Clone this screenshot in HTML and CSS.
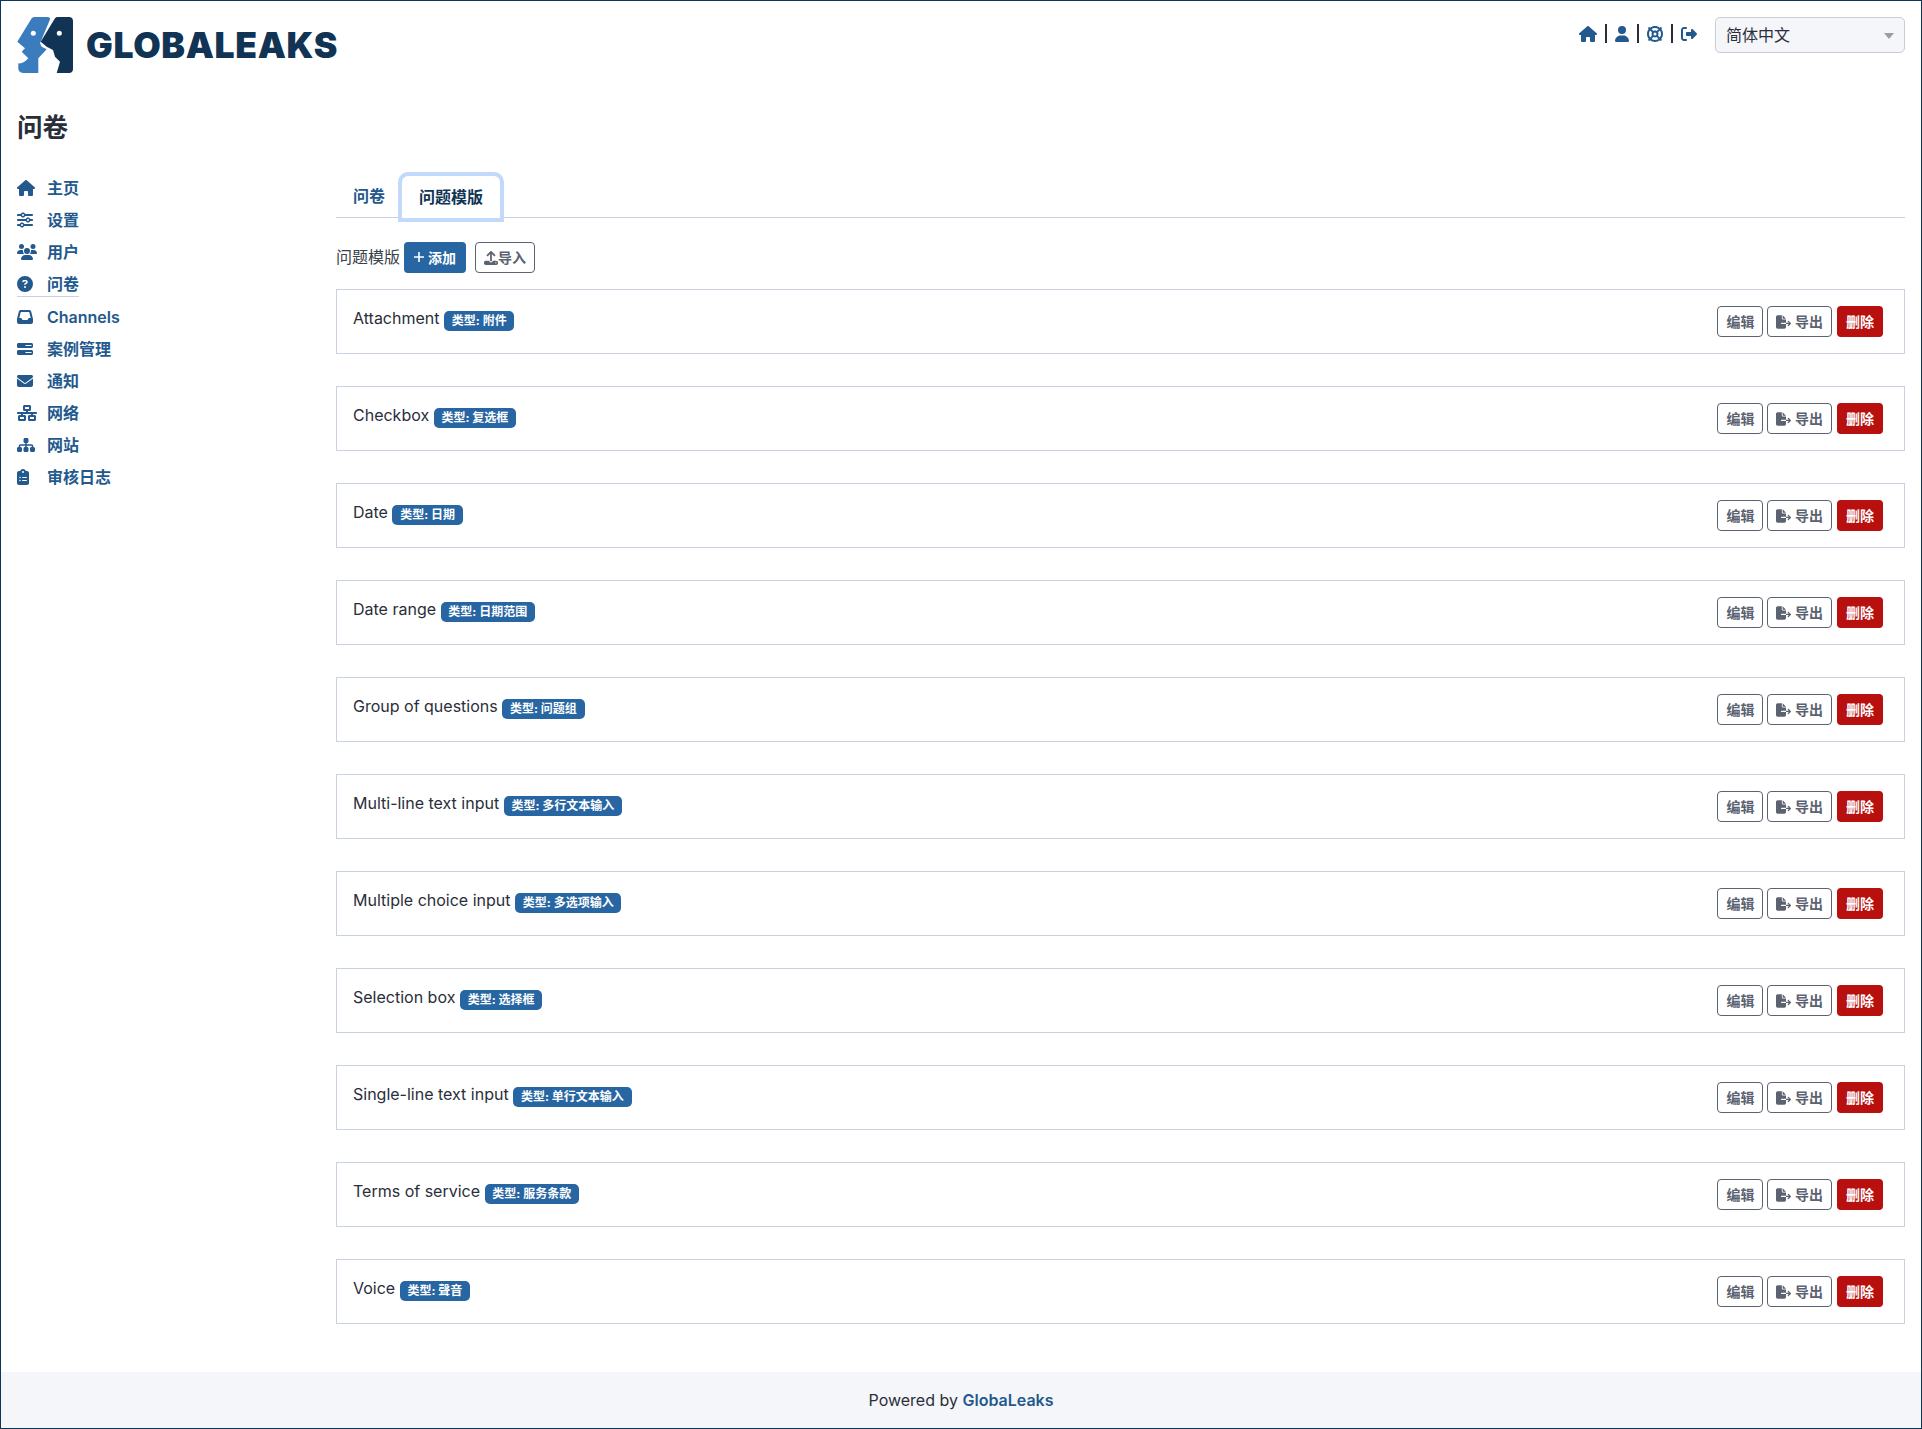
FILE: index.html
```html
<!DOCTYPE html>
<html lang="zh-CN">
<head>
    <meta charset="UTF-8">
    <meta name="viewport" content="width=device-width, initial-scale=1.0">
    <title>GlobaLeaks</title>
    <link rel="stylesheet" href="styles.css">
</head>
<body>
<div class="page">
    <header class="topbar">
        <a class="logo" href="#">
            <svg class="logo-mark" viewBox="0 0 56 56" width="56" height="56">
                <path class="face-left" d="M14.700 1.300C15.500.4 16.500 0 18 0H30C32.500 0 33.500 1 33 2.500L23 26.300L24.700 29.700L29.700 32.300L21.300 41.300V56H6C3 56 1.300 54 1.300 51.300V46.300Q6.500 47 11.300 41.300L4.700 34.700L8 31.300L.3 24.700Z"/>
                <circle class="eye" cx="16.300" cy="16.300" r="2.500"/>
                <path class="face-right" d="M38 1.300C38.800.4 39.500 0 41 0H52C54.500 0 56 1.500 56 4V52C56 54.500 54.500 56 52 56H39.700L43 44.700L38 39.700L36 33L29.700 29.700L23.700 24.700Z"/>
                <circle class="eye" cx="42.300" cy="16.300" r="2.500"/>
            </svg>
            <span class="logo-text">GLOBALEAKS</span>
        </a>
        <div class="top-right">
            <nav class="top-icons">
                <a href="#"><svg class="icon icon-home"><use href="#i-home"/></svg></a>
                <a href="#"><svg class="icon icon-user" viewBox="0 0 448 512"><path d="M224 256A128 128 0 1 0 224 0a128 128 0 1 0 0 256zm-45.700 48C79.800 304 0 383.800 0 482.300C0 498.700 13.300 512 29.700 512H418.300c16.400 0 29.700-13.300 29.700-29.700C448 383.800 368.200 304 269.700 304H178.300z"/></svg></a>
                <a href="#"><svg class="icon" viewBox="0 0 512 512"><path d="M367.200 412.500C335.900 434.900 297.500 448 256 448s-79.900-13.100-111.200-35.500l58-58c15.800 8.600 34 13.500 53.300 13.500s37.400-4.900 53.300-13.500l58 58zm90.700 .8c33.800-43.400 54-98 54-157.300s-20.200-113.900-54-157.300l9-9c12.500-12.500 12.500-32.800 0-45.300s-32.800-12.500-45.300 0l-9 9C369.900 20.200 315.300 0 256 0S142.100 20.200 98.700 54l-9-9C77.200 32.500 56.900 32.500 44.400 45s-12.500 32.800 0 45.300l9 9C20.200 142.100 0 196.700 0 256s20.200 113.900 54 157.300l-9 9c-12.500 12.500-12.500 32.800 0 45.300s32.800 12.500 45.300 0l9-9C142.100 491.800 196.700 512 256 512s113.900-20.200 157.300-54l9 9c12.500 12.500 32.800 12.500 45.300 0s12.500-32.800 0-45.300l-9-9zm-45.400-268C434.900 176.100 448 214.500 448 256s-13.100 79.900-35.500 111.200l-58-58c8.600-15.800 13.500-34 13.500-53.300s-4.900-37.400-13.500-53.300l58-58zm-45.300-45.300l-58 58C293.400 149 275.300 144 256 144s-37.400 4.900-53.300 13.500l-58-58C176.100 77.100 214.500 64 256 64s79.900 13.100 111.200 35.500zM157.500 309.300l-58 58C77.100 335.900 64 297.500 64 256s13.100-79.900 35.500-111.200l58 58C149 218.600 144 236.700 144 256s4.900 37.400 13.500 53.300zM208 256a48 48 0 1 1 96 0 48 48 0 1 1 -96 0z"/></svg></a>
                <a href="#"><svg class="icon" viewBox="0 0 512 512"><path d="M377.900 105.900L500.700 228.700c7.200 7.200 11.300 17.100 11.300 27.300s-4.100 20.100-11.300 27.300L377.900 406.100c-6.400 6.400-15 9.900-24 9.900c-18.700 0-33.900-15.200-33.900-33.900l0-62.100-128 0c-17.700 0-32-14.300-32-32l0-64c0-17.700 14.300-32 32-32l128 0 0-62.100c0-18.700 15.200-33.900 33.900-33.900c9 0 17.600 3.600 24 9.900zM160 96L96 96c-17.700 0-32 14.300-32 32l0 256c0 17.700 14.300 32 32 32l64 0c17.700 0 32 14.300 32 32s-14.300 32-32 32l-64 0c-53 0-96-43-96-96L0 128C0 75 43 32 96 32l64 0c17.700 0 32 14.300 32 32s-14.300 32-32 32z"/></svg></a>
            </nav>
            <div class="lang-select">简体中文<span class="caret"></span></div>
        </div>
    </header>

    <h1 class="page-title">问卷</h1>

    <div class="layout">
        <aside class="sidebar">
            <a class="side-link" href="#"><svg class="side-icon"><use href="#i-home"/></svg><span>主页</span></a>
            <a class="side-link" href="#"><svg class="side-icon" viewBox="0 0 512 512" preserveAspectRatio="xMinYMid meet"><path d="M0 416c0 17.700 14.300 32 32 32l54.700 0c12.300 28.300 40.500 48 73.300 48s61-19.700 73.300-48L480 448c17.700 0 32-14.300 32-32s-14.300-32-32-32l-246.700 0c-12.300-28.300-40.500-48-73.300-48s-61 19.700-73.300 48L32 384c-17.700 0-32 14.300-32 32zm128 0a32 32 0 1 1 64 0 32 32 0 1 1 -64 0zM320 256a32 32 0 1 1 64 0 32 32 0 1 1 -64 0zm32-80c-32.800 0-61 19.700-73.300 48L32 224c-17.700 0-32 14.300-32 32s14.300 32 32 32l246.700 0c12.300 28.300 40.500 48 73.300 48s61-19.700 73.300-48l54.700 0c17.700 0 32-14.300 32-32s-14.300-32-32-32l-54.700 0c-12.300-28.300-40.500-48-73.300-48zM192 128a32 32 0 1 1 0-64 32 32 0 1 1 0 64zm73.300-64C253 35.700 224.800 16 192 16s-61 19.700-73.300 48L32 64C14.300 64 0 78.300 0 96s14.300 32 32 32l86.700 0c12.300 28.300 40.500 48 73.300 48s61-19.700 73.300-48L480 128c17.700 0 32-14.300 32-32s-14.300-32-32-32L265.300 64z"/></svg><span>设置</span></a>
            <a class="side-link" href="#"><svg class="side-icon" viewBox="0 0 640 512" preserveAspectRatio="xMinYMid meet"><path d="M144 0a80 80 0 1 1 0 160A80 80 0 1 1 144 0zM512 0a80 80 0 1 1 0 160A80 80 0 1 1 512 0zM0 298.700C0 239.800 47.800 192 106.700 192h42.700c15.900 0 31 3.500 44.600 9.700c-1.300 7.200-1.900 14.700-1.900 22.300c0 38.200 16.800 72.500 43.300 96c-.2 0-.4 0-.7 0H21.300C9.600 320 0 310.400 0 298.700zM405.300 320c-.2 0-.4 0-.7 0c26.600-23.500 43.300-57.800 43.300-96c0-7.600-.7-15-1.900-22.300c13.600-6.300 28.700-9.700 44.600-9.700h42.700C592.200 192 640 239.800 640 298.700c0 11.800-9.600 21.300-21.300 21.300H405.300zM224 224a96 96 0 1 1 192 0 96 96 0 1 1 -192 0zM128 485.300C128 411.700 187.700 352 261.300 352H378.700C452.300 352 512 411.700 512 485.300c0 14.700-11.900 26.700-26.700 26.700H154.700c-14.700 0-26.700-11.900-26.700-26.700z"/></svg><span>用户</span></a>
            <a class="side-link active" href="#"><svg class="side-icon" viewBox="0 0 512 512" preserveAspectRatio="xMinYMid meet"><path d="M256 512A256 256 0 1 0 256 0a256 256 0 1 0 0 512zM169.800 165.300c7.900-22.300 29.100-37.300 52.800-37.300h58.300c34.900 0 63.100 28.300 63.100 63.100c0 22.600-12.100 43.500-31.700 54.800L280 264.400c-.2 13-10.900 23.600-24 23.600c-13.300 0-24-10.700-24-24V250.500c0-8.600 4.600-16.500 12.100-20.800l44.300-25.400c4.700-2.700 7.600-7.700 7.600-13.100c0-8.400-6.800-15.100-15.100-15.100H222.600c-3.400 0-6.400 2.100-7.500 5.300l-.4 1.200c-4.400 12.500-18.200 19-30.600 14.600s-19-18.200-14.600-30.600l.4-1.200zM224 352a32 32 0 1 1 64 0 32 32 0 1 1 -64 0z"/></svg><span>问卷</span></a>
            <a class="side-link" href="#"><svg class="side-icon" viewBox="0 0 512 512" preserveAspectRatio="xMinYMid meet"><path d="M121 32C91.600 32 66 52 58.900 80.500L1.900 308.400C.6 313.500 0 318.700 0 323.900V416c0 35.300 28.700 64 64 64H448c35.300 0 64-28.700 64-64V323.900c0-5.200-.6-10.400-1.900-15.500l-57-227.900C446 52 420.400 32 391 32H121zm0 64H391l48 192H387.800c-12.100 0-23.200 6.800-28.600 17.700l-14.300 28.600c-5.400 10.800-16.500 17.700-28.600 17.700H195.800c-12.100 0-23.200-6.800-28.600-17.700l-14.300-28.600c-5.400-10.800-16.500-17.700-28.600-17.700H73L121 96z"/></svg><span>Channels</span></a>
            <a class="side-link" href="#"><svg class="side-icon" viewBox="0 0 16 16" preserveAspectRatio="xMinYMid meet"><path fill-rule="evenodd" d="M1.500 2h13c.8 0 1.500.7 1.500 1.500v2c0 .8-.7 1.500-1.500 1.500h-13C.7 7 0 6.300 0 5.500v-2C0 2.700.7 2 1.500 2zM8.500 3.900v1.200h6V3.900zM1.500 9h13c.8 0 1.500.7 1.500 1.500v2c0 .8-.7 1.500-1.500 1.500h-13C.7 14 0 13.300 0 12.500v-2C0 9.700.7 9 1.500 9zM8.500 10.900v1.200h6v-1.200z"/></svg><span>案例管理</span></a>
            <a class="side-link" href="#"><svg class="side-icon" viewBox="0 0 512 512" preserveAspectRatio="xMinYMid meet"><path d="M48 64C21.500 64 0 85.500 0 112c0 15.100 7.100 29.300 19.200 38.400L236.800 313.600c11.400 8.500 27 8.500 38.400 0L492.800 150.400c12.100-9.100 19.200-23.300 19.200-38.400c0-26.500-21.500-48-48-48H48zM0 176V384c0 35.300 28.700 64 64 64H448c35.300 0 64-28.700 64-64V176L294.400 339.200c-22.800 17.100-54 17.100-76.800 0L0 176z"/></svg><span>通知</span></a>
            <a class="side-link" href="#"><svg class="side-icon" viewBox="0 0 640 512" preserveAspectRatio="xMinYMid meet"><path d="M256 64H384v64H256V64zM240 0c-26.500 0-48 21.500-48 48v96c0 26.500 21.500 48 48 48h48v32H32c-17.700 0-32 14.300-32 32s14.300 32 32 32h96v32H80c-26.500 0-48 21.500-48 48v96c0 26.500 21.500 48 48 48H240c26.500 0 48-21.500 48-48V368c0-26.500-21.500-48-48-48H192V288H448v32H400c-26.500 0-48 21.500-48 48v96c0 26.500 21.500 48 48 48H560c26.500 0 48-21.500 48-48V368c0-26.500-21.500-48-48-48H512V288h96c17.700 0 32-14.300 32-32s-14.300-32-32-32H352V192h48c26.500 0 48-21.500 48-48V48c0-26.500-21.500-48-48-48H240zM96 448V384H224v64H96zm320-64H544v64H416V384z"/></svg><span>网络</span></a>
            <a class="side-link" href="#"><svg class="side-icon" viewBox="0 0 576 512" preserveAspectRatio="xMinYMid meet"><path d="M208 80c0-26.500 21.500-48 48-48h64c26.500 0 48 21.500 48 48v64c0 26.500-21.500 48-48 48h-8v40H464c30.900 0 56 25.100 56 56v32h8c26.500 0 48 21.500 48 48v64c0 26.500-21.500 48-48 48H464c-26.500 0-48-21.500-48-48V368c0-26.500 21.500-48 48-48h8V288c0-4.400-3.600-8-8-8H312v40h8c26.500 0 48 21.500 48 48v64c0 26.500-21.500 48-48 48H256c-26.500 0-48-21.500-48-48V368c0-26.500 21.500-48 48-48h8V280H112c-4.400 0-8 3.600-8 8v32h8c26.500 0 48 21.500 48 48v64c0 26.500-21.500 48-48 48H48c-26.500 0-48-21.500-48-48V368c0-26.500 21.500-48 48-48h8V288c0-30.900 25.100-56 56-56H264V192h-8c-26.500 0-48-21.500-48-48V80z"/></svg><span>网站</span></a>
            <a class="side-link" href="#"><svg class="side-icon" viewBox="0 0 384 512" preserveAspectRatio="xMinYMid meet"><path d="M192 0c-41.800 0-77.400 26.700-90.500 64H64C28.700 64 0 92.700 0 128V448c0 35.300 28.700 64 64 64H320c35.300 0 64-28.700 64-64V128c0-35.300-28.700-64-64-64H282.500C269.400 26.700 233.800 0 192 0zm0 64a32 32 0 1 1 0 64 32 32 0 1 1 0-64zM72 272a24 24 0 1 1 48 0 24 24 0 1 1 -48 0zm104-16H304c8.800 0 16 7.200 16 16s-7.200 16-16 16H176c-8.800 0-16-7.200-16-16s7.200-16 16-16zM72 368a24 24 0 1 1 48 0 24 24 0 1 1 -48 0zm88 0c0-8.800 7.200-16 16-16H304c8.800 0 16 7.200 16 16s-7.200 16-16 16H176c-8.800 0-16-7.200-16-16z"/></svg><span>审核日志</span></a>
        </aside>

        <main class="content">
            <div class="tabs">
                <a class="tab" href="#">问卷</a>
                <a class="tab tab-active" href="#">问题模版</a>
            </div>

            <div class="toolbar">
                <span class="toolbar-label">问题模版</span>
                <button class="btn btn-primary"><svg class="plus" viewBox="0 0 10 10"><path d="M4.200 0h1.600v4.200H10v1.600H5.800V10H4.200V5.800H0V4.200h4.200z"/></svg>添加</button>
                <button class="btn btn-outline toolbar-import"><svg class="btn-icon icon-upload" viewBox="0 0 512 512"><path d="M288 109.300V352c0 17.700-14.300 32-32 32s-32-14.300-32-32V109.300l-73.400 73.400c-12.500 12.500-32.800 12.500-45.300 0s-12.500-32.800 0-45.300l128-128c12.500-12.500 32.800-12.500 45.300 0l128 128c12.500 12.500 12.500 32.800 0 45.300s-32.800 12.500-45.300 0L288 109.300zM64 352H192c0 35.300 28.700 64 64 64s64-28.700 64-64H448c35.300 0 64 28.700 64 64v32c0 35.300-28.700 64-64 64H64c-35.300 0-64-28.700-64-64V416c0-35.300 28.700-64 64-64zM432 456a24 24 0 1 0 0-48 24 24 0 1 0 0 48z"/></svg>导入</button>
            </div>

            <div class="row"><div class="row-title">Attachment <span class="badge">类型: 附件</span></div><div class="row-actions"><button class="btn btn-outline">编辑</button><button class="btn btn-outline"><svg class="btn-icon"><use href="#i-export"/></svg> 导出</button><button class="btn btn-danger">删除</button></div></div>
            <div class="row"><div class="row-title">Checkbox <span class="badge">类型: 复选框</span></div><div class="row-actions"><button class="btn btn-outline">编辑</button><button class="btn btn-outline"><svg class="btn-icon"><use href="#i-export"/></svg> 导出</button><button class="btn btn-danger">删除</button></div></div>
            <div class="row"><div class="row-title">Date <span class="badge">类型: 日期</span></div><div class="row-actions"><button class="btn btn-outline">编辑</button><button class="btn btn-outline"><svg class="btn-icon"><use href="#i-export"/></svg> 导出</button><button class="btn btn-danger">删除</button></div></div>
            <div class="row"><div class="row-title">Date range <span class="badge">类型: 日期范围</span></div><div class="row-actions"><button class="btn btn-outline">编辑</button><button class="btn btn-outline"><svg class="btn-icon"><use href="#i-export"/></svg> 导出</button><button class="btn btn-danger">删除</button></div></div>
            <div class="row"><div class="row-title">Group of questions <span class="badge">类型: 问题组</span></div><div class="row-actions"><button class="btn btn-outline">编辑</button><button class="btn btn-outline"><svg class="btn-icon"><use href="#i-export"/></svg> 导出</button><button class="btn btn-danger">删除</button></div></div>
            <div class="row"><div class="row-title">Multi-line text input <span class="badge">类型: 多行文本输入</span></div><div class="row-actions"><button class="btn btn-outline">编辑</button><button class="btn btn-outline"><svg class="btn-icon"><use href="#i-export"/></svg> 导出</button><button class="btn btn-danger">删除</button></div></div>
            <div class="row"><div class="row-title">Multiple choice input <span class="badge">类型: 多选项输入</span></div><div class="row-actions"><button class="btn btn-outline">编辑</button><button class="btn btn-outline"><svg class="btn-icon"><use href="#i-export"/></svg> 导出</button><button class="btn btn-danger">删除</button></div></div>
            <div class="row"><div class="row-title">Selection box <span class="badge">类型: 选择框</span></div><div class="row-actions"><button class="btn btn-outline">编辑</button><button class="btn btn-outline"><svg class="btn-icon"><use href="#i-export"/></svg> 导出</button><button class="btn btn-danger">删除</button></div></div>
            <div class="row"><div class="row-title">Single-line text input <span class="badge">类型: 单行文本输入</span></div><div class="row-actions"><button class="btn btn-outline">编辑</button><button class="btn btn-outline"><svg class="btn-icon"><use href="#i-export"/></svg> 导出</button><button class="btn btn-danger">删除</button></div></div>
            <div class="row"><div class="row-title">Terms of service <span class="badge">类型: 服务条款</span></div><div class="row-actions"><button class="btn btn-outline">编辑</button><button class="btn btn-outline"><svg class="btn-icon"><use href="#i-export"/></svg> 导出</button><button class="btn btn-danger">删除</button></div></div>
            <div class="row"><div class="row-title">Voice <span class="badge">类型: 聲音</span></div><div class="row-actions"><button class="btn btn-outline">编辑</button><button class="btn btn-outline"><svg class="btn-icon"><use href="#i-export"/></svg> 导出</button><button class="btn btn-danger">删除</button></div></div>
        </main>
    </div>

    <footer class="footer">Powered by <a href="#">GlobaLeaks</a></footer>
</div>

<svg class="sprites" width="0" height="0">
    <symbol id="i-home" viewBox="0 0 576 512" preserveAspectRatio="xMinYMid meet"><path d="M575.800 255.500c0 18-15 32.100-32 32.100h-32l.7 160.200c0 2.700-.2 5.400-.5 8.100V472c0 22.100-17.900 40-40 40H456c-1.100 0-2.200 0-3.300-.1c-1.400 .1-2.800 .1-4.200 .1H416 392c-22.100 0-40-17.900-40-40V448 384c0-17.700-14.300-32-32-32H256c-17.700 0-32 14.300-32 32v64 24c0 22.100-17.900 40-40 40H160 128.100c-1.500 0-3-.1-4.500-.2c-1.200 .1-2.400 .2-3.600 .2H104c-22.100 0-40-17.900-40-40V360c0-.9 0-1.900 .1-2.800V287.600H32c-18 0-32-14-32-32.100c0-9 3-17 10-24L266.400 8c7-7 15-8 22-8s15 2 21 7L564.800 231.500c8 7 12 15 11 24z"/></symbol>
    <symbol id="i-export" viewBox="0 0 576 512"><path d="M0 64C0 28.700 28.700 0 64 0H224V128c0 17.700 14.300 32 32 32H384V288H216c-13.300 0-24 10.700-24 24s10.700 24 24 24H384V448c0 35.300-28.700 64-64 64H64c-35.300 0-64-28.700-64-64V64zM384 336V288H494.100l-39-39c-9.400-9.400-9.400-24.600 0-33.900s24.600-9.400 33.900 0l80 80c9.400 9.400 9.400 24.600 0 33.900l-80 80c-9.400 9.400-24.600 9.400-33.900 0s-9.400-24.600 0-33.900l39-39H384zm0-208H256V0L384 128z"/></symbol>
</svg>
</body>
</html>
```
FILE: styles.css
```css
* {
    margin: 0;
    padding: 0;
    box-sizing: border-box;
}

html, body {
    height: 100%;
}

body {
    background: #fff;
    color: #2a2e3a;
    font-family: Inter, "Noto Sans CJK SC", sans-serif;
    font-size: 16px;
}

a {
    text-decoration: none;
}

.sprites {
    position: absolute;
}

/* Page frame */
.page {
    display: flex;
    flex-direction: column;
    height: 1429px;
    border: 1px solid #0f3557;
}

/* Header */
.topbar {
    display: flex;
    justify-content: space-between;
    padding: 16px 16px 0 16px;
    height: 89px;
}

.logo {
    display: flex;
    align-items: center;
    height: 56px;
    gap: 13px;
}

.logo-mark {
    flex: none;
}

.face-left {
    fill: #3a7cbd;
}

.face-right {
    fill: #113354;
}

.eye {
    fill: #fff;
}

.logo-text {
    color: #113354;
    font-family: Inter, sans-serif;
    font-weight: 900;
    font-size: 35.5px;
    letter-spacing: 0.65px;
}

.top-right {
    display: flex;
    align-items: flex-start;
}

.top-icons {
    display: flex;
    align-items: center;
    margin-top: 7px;
    margin-right: 18px;
}

.top-icons a {
    display: flex;
    align-items: center;
    height: 19px;
    padding: 0 8px;
    border-right: 2px solid #2a2e3a;
}

.top-icons a:first-child {
    padding-left: 0;
}

.top-icons a:last-child {
    border-right: none;
    padding-right: 0;
}

.icon {
    width: 16px;
    height: 16px;
    fill: #23598d;
}

.icon-home {
    width: 18px;
}

.icon-user {
    width: 14px;
}

.lang-select {
    position: relative;
    width: 190px;
    height: 36px;
    padding: 0 10px;
    line-height: 35px;
    font-size: 16px;
    color: #2a2e3a;
    background: #f5f6fa;
    border: 1px solid #c9ccd2;
    border-radius: 5px;
}

.caret {
    position: absolute;
    right: 10px;
    top: 15px;
    border-left: 5px solid transparent;
    border-right: 5px solid transparent;
    border-top: 6px solid #9a9da3;
}

.page-title {
    font-size: 25.6px;
    font-weight: 700;
    line-height: 36px;
    margin: 20px 0 0 16px;
    color: #2a2e3a;
}

/* Sidebar and content */
.layout {
    display: flex;
    flex: 1;
    padding: 0 16px;
}

.sidebar {
    width: 319px;
    flex: none;
    padding-top: 30px;
    display: flex;
    flex-direction: column;
    align-items: flex-start;
    gap: 8px;
}

.side-link {
    display: flex;
    align-items: center;
    gap: 10px;
    line-height: 24px;
    color: #23598d;
    font-weight: 600;
    font-size: 16px;
}

.side-link.active {
    border-bottom: 1px solid #c9d2e0;
}

.side-icon {
    width: 20px;
    height: 16px;
    fill: #23598d;
}

.content {
    flex: 1;
}

.tabs {
    display: flex;
    align-items: flex-end;
    height: 42px;
    margin-top: 30px;
    border-bottom: 1px solid #c9d2e0;
}

.tab {
    padding: 0 17px;
    line-height: 41px;
    color: #23598d;
    font-weight: 600;
    font-size: 16px;
}

.tab-active {
    position: relative;
    height: 42px;
    line-height: 42px;
    margin-bottom: -1px;
    color: #113354;
    background: #fff;
    border-radius: 6px 6px 0 0;
    box-shadow: 0 0 0 4px #c2d9fb;
}

.toolbar {
    display: flex;
    align-items: center;
    margin-top: 24px;
    margin-bottom: 16px;
    height: 31px;
    font-size: 16px;
    color: #3b3f4a;
}

.toolbar-label {
    margin-bottom: 4px;
}

.toolbar .btn-primary {
    margin-left: 4px;
}

.toolbar-import {
    margin-left: 9px;
}

/* Buttons */
.btn {
    display: inline-flex;
    align-items: center;
    justify-content: center;
    height: 31px;
    padding: 0 8px 2px;
    font-family: inherit;
    font-size: 14px;
    font-weight: 600;
    border-radius: 4px;
    border: 1px solid transparent;
    white-space: pre;
}

.btn-primary {
    background: #2766a3;
    color: #fff;
    padding: 0 9px 2px;
}

.plus {
    width: 10px;
    height: 10px;
    margin-right: 4px;
    fill: #fff;
}

.btn-outline {
    background: #fff;
    color: #5b6270;
    border-color: #5b6270;
}

.btn-danger {
    background: #b80f0f;
    color: #fff;
}

.btn-icon {
    width: 15px;
    height: 14px;
    margin-top: 2px;
    fill: #5b6270;
}

.icon-upload {
    width: 14px;
}

/* Rows */
.row {
    display: flex;
    justify-content: space-between;
    height: 65px;
    margin-bottom: 32px;
    padding: 16px;
    border: 1px solid #c9d2e0;
}

.row-title {
    line-height: 24px;
    font-size: 16px;
    color: #2a2e3a;
}

.badge {
    display: inline-block;
    vertical-align: -1px;
    padding: 0 7.8px;
    line-height: 20px;
    font-size: 12px;
    font-weight: 700;
    color: #fff;
    background: #2766a3;
    border-radius: 5px;
}

.row-actions {
    display: flex;
    gap: 4px;
    margin-right: 5px;
}

.row-actions .btn-danger {
    margin-left: 1px;
}

/* Footer */
.footer {
    height: 56px;
    line-height: 56px;
    text-align: center;
    background: #f5f6fa;
    font-size: 16px;
    color: #2a2e3a;
}

.footer a {
    color: #23598d;
    font-weight: 600;
}
```
